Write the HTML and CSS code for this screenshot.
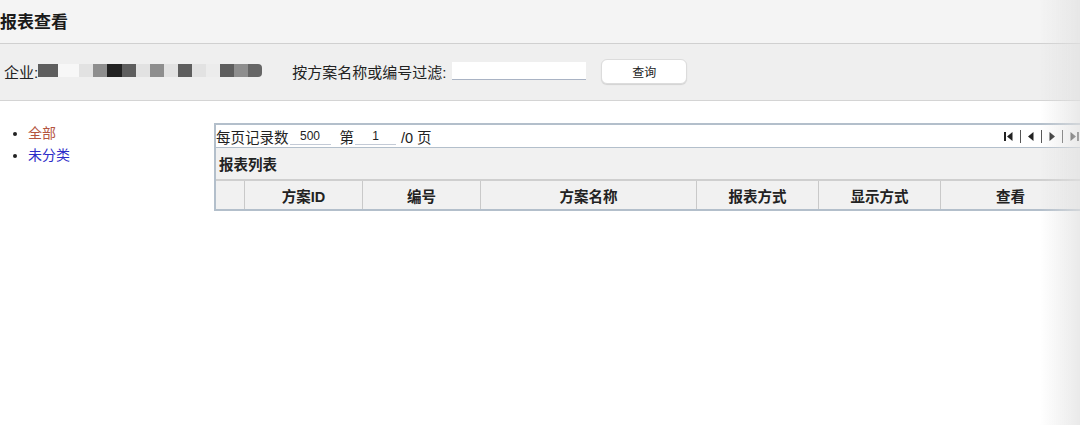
FILE: index.html
```html
<!DOCTYPE html>
<html lang="zh-CN">
<head>
    <meta charset="UTF-8">
    <title>报表查看</title>
    <link rel="stylesheet" href="styles.css">
</head>
<body>
    <div class="title-bar">
        <h2>报表查看</h2>
    </div>

    <div class="filter-bar">
        <span class="label">企业:</span>
        <div class="masked">
            <i class="m2 w20"></i><i class="gap"></i><i class="m6"></i><i class="m3"></i><i class="m1 w15"></i><i class="m2"></i><i class="m6"></i><i class="m3"></i><i class="m6"></i><i class="m2"></i><i class="m6"></i><i class="m5"></i><i class="m2"></i><i class="m3"></i><i class="m4"></i>
        </div>
        <span class="label filter-label">按方案名称或编号过滤:</span>
        <input type="text" class="filter-input">
        <button class="query-btn">查询</button>
    </div>

    <div class="content">
        <ul class="category">
            <li><a class="all">全部</a></li>
            <li><a class="none">未分类</a></li>
        </ul>

        <div class="grid">
            <div class="pager">
                <span>每页记录数</span>
                <input type="text" class="pager-input" value="500">
                <span class="page-no">第</span>
                <input type="text" class="pager-input" value="1">
                <span class="page-total">/0 页</span>
                <div class="pager-nav">
                    <svg width="9" height="11" viewBox="0 0 9 11"><rect x="0" y="1" width="2" height="9" fill="#222"/><polygon points="8.5,1 8.5,10 3,5.5" fill="#222"/></svg>
                    <span class="sep"></span>
                    <svg width="6" height="11" viewBox="0 0 6 11"><polygon points="5.5,1 5.5,10 0,5.5" fill="#222"/></svg>
                    <span class="sep"></span>
                    <svg width="6" height="11" viewBox="0 0 6 11"><polygon points="0.5,1 0.5,10 6,5.5" fill="#222"/></svg>
                    <span class="sep"></span>
                    <svg width="9" height="11" viewBox="0 0 9 11"><polygon points="0.5,1 0.5,10 6,5.5" fill="#222"/><rect x="7" y="1" width="2" height="9" fill="#222"/></svg>
                </div>
            </div>
            <div class="grid-title">报表列表</div>
            <div class="grid-head">
                <div class="col c0"></div>
                <div class="col c1">方案ID</div>
                <div class="col c2">编号</div>
                <div class="col c3">方案名称</div>
                <div class="col c4">报表方式</div>
                <div class="col c5">显示方式</div>
                <div class="col c6">查看</div>
            </div>
        </div>
    </div>

    <div class="edge-shade"></div>
</body>
</html>
```

FILE: styles.css
```css
*{
    margin: 0px;
    padding: 0px;
    box-sizing: border-box;
    font-family: "Liberation Sans", "Noto Sans CJK SC", sans-serif;
}
body{
    width: 1080px;
    height: 425px;
    overflow: hidden;
    background-color: white;
    color: #222;
    font-size: 15px;
}

/* top */
.title-bar{
    height: 44px;
    background-color: #f4f4f4;
    border-bottom: 1px solid #d0d0d0;
    display: flex;
    align-items: center;
    padding-bottom: 2px;
}
.title-bar h2{
    font-size: 17px;
    font-weight: bold;
    margin-left: 0px;
    color: #1a1a1a;
}

.filter-bar{
    height: 57px;
    background-color: #efefef;
    border-bottom: 1px solid #d4d4d4;
    display: flex;
    flex-direction: row;
    align-items: center;
    padding-left: 4px;
    padding-bottom: 2px;
}
.masked{
    display: flex;
    height: 13px;
    margin-top: -1px;
}
.masked i{
    display: block;
    width: 14px;
    height: 13px;
}
.masked .w20{ width: 20px; }
.masked .w15{ width: 15px; }
.masked .gap{ width: 21px; background: #f7f7f7; }
.masked .m1{ background: #222; }
.masked .m2{ background: #5e5e5e; }
.masked .m3{ background: #8e8e8e; }
.masked .m4{ background: #666; border-radius: 0 4px 4px 0; }
.masked .m5{ background: #ececec; }
.masked .m6{ background: #e2e2e2; }
.filter-label{
    margin-left: 30px;
}
.filter-input{
    width: 134px;
    height: 18px;
    margin-left: 6px;
    border: none;
    border-bottom: 1px solid #a9b3c4;
    background-color: white;
}
.query-btn{
    width: 86px;
    height: 25px;
    margin-left: 15px;
    background-color: white;
    border: 1px solid #dcdcdc;
    border-radius: 6px;
    box-shadow: 0 1px 1px rgba(0,0,0,0.12);
    font-size: 12px;
    color: #222;
}

/* middle */
.content{
    display: flex;
    flex-direction: row;
    padding-top: 21px;
}
.category{
    width: 214px;
    flex-shrink: 0;
    padding-left: 28px;
    list-style: disc;
    line-height: 22px;
    font-size: 14px;
}
.category .all{ color: #b4553f; }
.category .none{ color: #2d2dc8; }

.grid{
    width: 880px;
    flex-shrink: 0;
    margin-top: 1px;
    border: 2px solid #b3bfcb;
    border-right: none;
}
.pager{
    height: 23px;
    display: flex;
    align-items: center;
    background-color: white;
    border-bottom: 1px solid #b3bfcb;
    font-size: 14.5px;
}
.pager-input{
    width: 41px;
    height: 18px;
    margin-left: 1px;
    border: none;
    border-bottom: 1px solid #c3cad6;
    text-align: center;
    font-size: 12px;
    color: #222;
}
.page-no{
    margin-left: 9px;
}
.page-total{
    margin-left: 5px;
}
.pager-nav{
    margin-left: auto;
    width: 90px;
    display: flex;
    align-items: center;
    gap: 7px;
}
.pager-nav .sep{
    width: 1px;
    height: 13px;
    background-color: #555;
}
.grid-title{
    height: 33px;
    background-color: #f1f1f1;
    border-bottom: 2px solid #cfcfcf;
    display: flex;
    align-items: center;
    padding-left: 3px;
    font-weight: bold;
    font-size: 14.5px;
}
.grid-head{
    display: flex;
    height: 28px;
    background-color: #f1f1f1;
}
.col{
    display: flex;
    align-items: center;
    justify-content: center;
    border-right: 1px solid #c9c9c9;
    font-weight: bold;
    font-size: 14.5px;
}
.c0{ width: 29px; }
.c1{ width: 118px; }
.c2{ width: 118px; }
.c3{ width: 216px; }
.c4{ width: 122px; }
.c5{ width: 122px; }
.c6{ width: 140px; }

.edge-shade{
    position: fixed;
    top: 0px;
    right: 0px;
    width: 40px;
    height: 425px;
    background: linear-gradient(to right, rgba(230,230,230,0), rgba(225,225,225,0.7));
    pointer-events: none;
}
```
